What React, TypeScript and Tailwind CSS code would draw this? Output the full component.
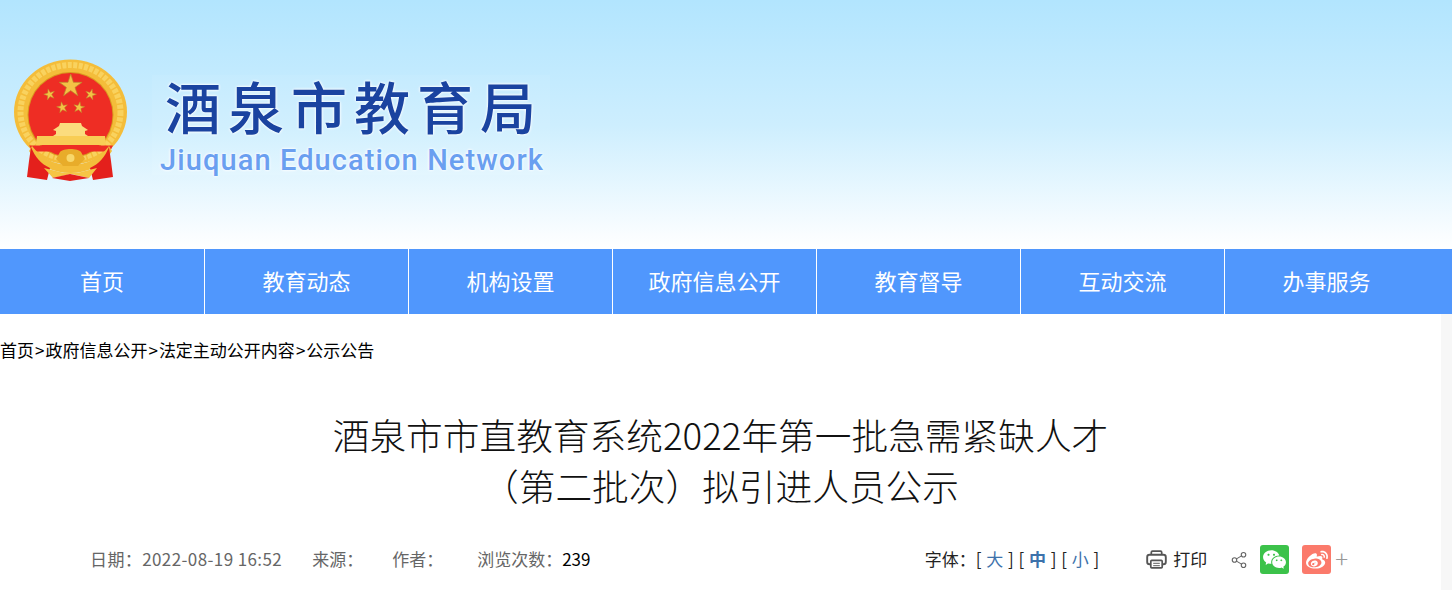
import { Share2 } from 'lucide-react';
import { RiWechatFill, RiWeiboFill } from 'react-icons/ri';

const navItems = ['首页', '教育动态', '机构设置', '政府信息公开', '教育督导', '互动交流', '办事服务'];

function starPoints(cx: number, cy: number, r: number, rot = 0) {
  const pts: string[] = [];
  for (let i = 0; i < 10; i++) {
    const rad = i % 2 === 0 ? r : r * 0.38;
    const a = ((-90 + rot + i * 36) * Math.PI) / 180;
    pts.push(`${(cx + rad * Math.cos(a)).toFixed(1)},${(cy + rad * Math.sin(a)).toFixed(1)}`);
  }
  return pts.join(' ');
}

// national emblem, coordinates are page pixels
function Emblem() {
  return (
    <svg viewBox="10 55 125 130" className="w-[125px] h-[130px] shrink-0 blur-[0.4px]">
      <ellipse cx="70.5" cy="112" rx="56.5" ry="52.5" fill="#f4bd3a" />
      <ellipse cx="70.5" cy="112" rx="50" ry="47" fill="none" stroke="#f9d25e" strokeWidth="6" strokeDasharray="4 1.500" />
      <ellipse cx="70.5" cy="115" rx="43" ry="43" fill="#d9991f" />
      <ellipse cx="70.5" cy="115" rx="42" ry="42" fill="#ee2d24" />
      <polygon points={starPoints(70.7, 86, 12)} fill="#f4c245" stroke="#b88a2c" strokeWidth="0.7" />
      <polygon points={starPoints(49.5, 94.5, 5.8, -15)} fill="#f4c245" stroke="#b88a2c" strokeWidth="0.5" />
      <polygon points={starPoints(90.7, 94.5, 5.8, 15)} fill="#f4c245" stroke="#b88a2c" strokeWidth="0.5" />
      <polygon points={starPoints(62.3, 107.5, 5.8, -10)} fill="#f4c245" stroke="#b88a2c" strokeWidth="0.5" />
      <polygon points={starPoints(79, 107.5, 5.8, 10)} fill="#f4c245" stroke="#b88a2c" strokeWidth="0.5" />
      <path d="M60 123h21l1 3 6 4-3 1v3l3 2H53l3-2v-3l-3-1 6-4z" fill="#fbdc7e" />
      <path d="M37 136h68l1 9H36z" fill="#f8cd55" />
      <path d="M29 145.500h84l-3 6H33z" fill="#ee2d24" />
      <path d="M32 146c9 12 23 19 38.500 19S100 158 109 146l3 5c-8 14-24 22-41.500 22S37 165 29 151z" fill="#f3bd3b" />
      <path d="M31 147l-2 14-2 16 20 3 3-12c-9-4-15-11-19-21z" fill="#e4201c" />
      <path d="M109 147l2 14 2 16-20 3-3-12c9-4 15-11 19-21z" fill="#e4201c" />
      <path d="M44 168l20 5h13l20-5-8 10-18-4-18 4z" fill="#f6c545" />
      <path d="M60 152c3-4 18-4 21 0l4 7-7 7H63l-7-7z" fill="#e8ac2a" />
      <circle cx="70.500" cy="158" r="4" fill="#f8d76a" />
      <path d="M52 178l18-4 19 4-19 3z" fill="#e4201c" />
    </svg>
  );
}

function PrintIcon() {
  return (
    <svg viewBox="0 0 22 20" className="w-[21px] h-[19px] text-[#555]" fill="none" stroke="currentColor">
      <path d="M5.500 5V2.500c0-.8.500-1.300 1.300-1.300h8.400c.8 0 1.300.5 1.300 1.300V5" strokeWidth="1.800" />
      <rect x="1.200" y="5" width="19.600" height="10" rx="2.500" strokeWidth="2" />
      <rect x="5" y="11" width="12" height="7.800" rx="1" fill="#fff" strokeWidth="1.800" />
      <path d="M7.500 14h7M7.500 16.500h7" strokeWidth="1" />
    </svg>
  );
}

export default function App() {
  return (
    <div className="h-[590px] overflow-hidden bg-[#f7f7f7] font-['Noto_Sans_CJK_SC','Microsoft_YaHei',sans-serif]">
      <header className="h-[249px] bg-gradient-to-b from-[#b2e5fe] via-[#cdeefe] to-white flex items-start pt-[55px] pl-[10px]">
        <Emblem />
        <div className="ml-[17px] mt-[20px] w-[398px] h-[100px] bg-white/5 pl-[13px] flex flex-col">
          <h1 className="text-[56px] leading-[54px] mt-[3px] font-medium tracking-[7px] whitespace-nowrap text-[#1a43a0] [text-shadow:0_0_3px_#fff,0_0_3px_#fff]">
            酒泉市教育局
          </h1>
          <div className="mt-[11px] -ml-[5px] text-[29px] leading-[34px] font-medium font-['Roboto',sans-serif] tracking-[1.100px] whitespace-nowrap text-[#6a9ff0] [text-shadow:0_0_3px_#fff,0_0_3px_#fff]">
            Jiuquan Education Network
          </div>
        </div>
      </header>

      <nav className="h-[65px] bg-[#5097fd] flex">
        {navItems.map((item, i) => (
          <a
            key={item}
            className={`flex-none w-[204px] pb-[2px] flex items-center justify-center text-[22px] text-white ${
              i === 0 ? '' : 'border-l border-white'
            }`}
          >
            {item}
          </a>
        ))}
      </nav>

      <main className="w-[1441px] h-[276px] bg-white">
        <div className="pt-[24px] text-[17px] leading-[24px] text-black whitespace-nowrap">
          首页<span className="mx-px">&gt;</span>政府信息公开<span className="mx-px">&gt;</span>法定主动公开内容<span className="mx-px">&gt;</span>公示公告
        </div>
        <h2 className="mt-[47px] text-center font-light text-[36.700px] leading-[51px] text-[#111]">
          酒泉市市直教育系统2022年第一批急需紧缺人才
          <br />
          （第二批次）拟引进人员公示
        </h2>
        <div className="mt-[34px] flex items-center justify-between text-[17px] leading-[24px] whitespace-nowrap">
          <div className="ml-[90px] pb-[1px] flex text-[#666]">
            <span className="tracking-[0.400px]">日期：2022-08-19 16:52</span>
            <span className="ml-[30px]">来源：</span>
            <span className="ml-[29px]">作者：</span>
            <span className="ml-[34px]">浏览次数：<span className="text-black">239</span></span>
          </div>
          <div className="flex items-center mr-[93px] text-[#222]">
            <span className="pb-[1px]">字体：</span>
            <span className="flex gap-[4.750px] pb-[1px]">
              <span>[</span>
              <a className="text-[#3d72ab]">大</a>
              <span>]</span>
              <span>[</span>
              <a className="text-[#3d72ab] font-bold">中</a>
              <span>]</span>
              <span>[</span>
              <a className="text-[#3d72ab]">小</a>
              <span>]</span>
            </span>
            <span className="ml-[47px] flex items-center gap-[6px]"><PrintIcon /><span className="pb-[1px]">打印</span></span>
            <Share2 className="ml-[23px] w-[18px] h-[18px] text-[#666]" strokeWidth={1.500} />
            <span className="ml-[12px] w-[29px] h-[29px] rounded-[3px] bg-[#3cc24a] flex items-center justify-center">
              <RiWechatFill className="w-[25px] h-[25px] text-white" />
            </span>
            <span className="ml-[13px] w-[29px] h-[29px] rounded-[3px] bg-[#fb7a6b] flex items-center justify-center">
              <RiWeiboFill className="w-[24px] h-[24px] text-white" />
            </span>
            <span className="ml-[4px] pb-[3px] text-[24px] leading-none font-light text-[#999]">+</span>
          </div>
        </div>
      </main>
    </div>
  );
}
